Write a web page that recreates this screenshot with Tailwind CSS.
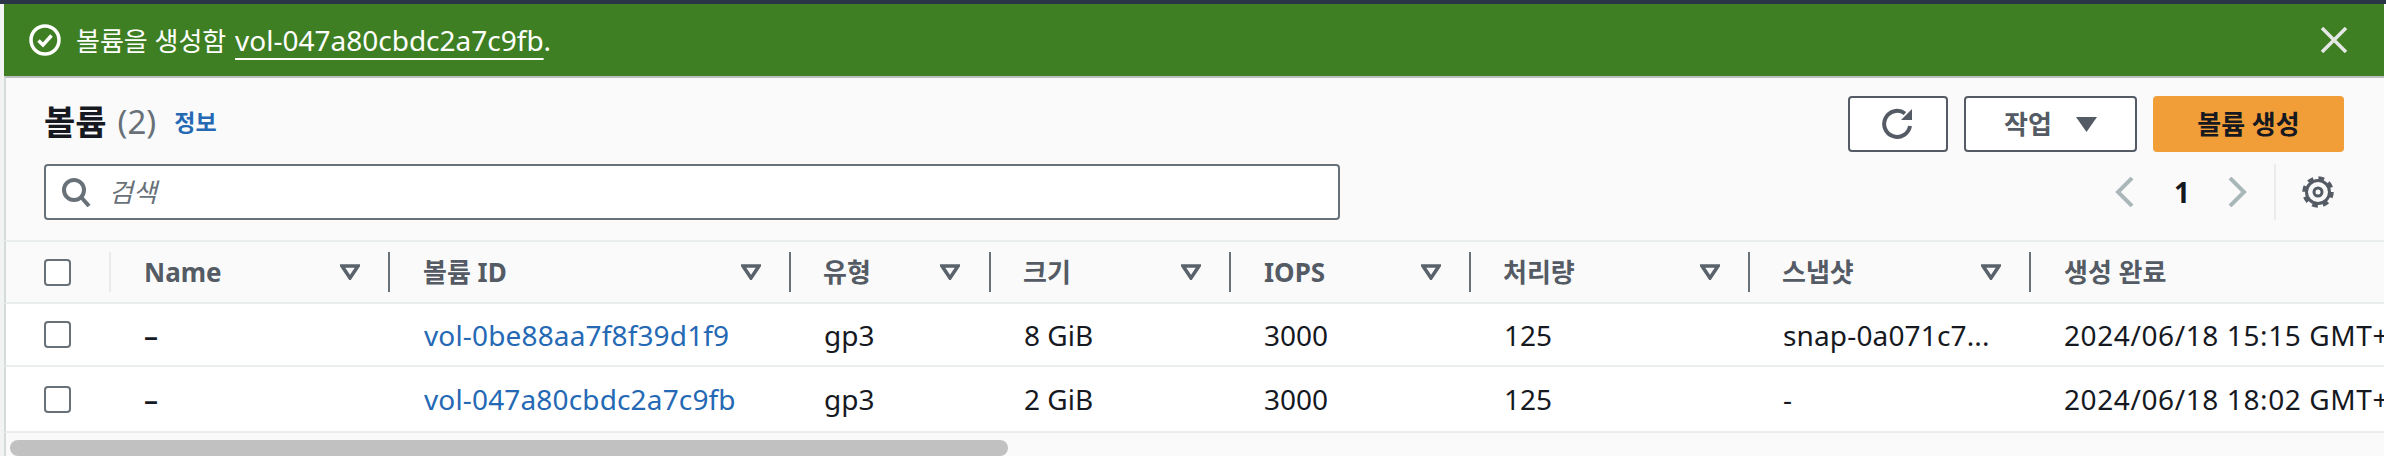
<!DOCTYPE html>
<html lang="ko">
<head>
<meta charset="UTF-8">
<title>볼륨</title>
<script src="https://cdn.jsdelivr.net/npm/@tailwindcss/browser@4"></script>
</head>
<body class="bg-white overflow-hidden font-['Noto_Sans','Noto_Sans_CJK_KR',sans-serif]">
<div class="w-[2386px] h-[456px] flex flex-col overflow-hidden">
  <div class="h-[4px] bg-[#2a3548] shrink-0"></div>
  <div class="flex flex-1 min-h-0">
    <div class="w-[4px] bg-[#f2f3f3] shrink-0"></div>
    <main class="w-[2380px] shrink-0 flex flex-col bg-[#fafafa]">
      <!-- flash -->
      <div class="h-[72px] shrink-0 bg-[#3f7f23] text-white flex items-center pl-[25px] pr-[37px]">
        <svg class="w-[32px] h-[32px] shrink-0" viewBox="0 0 32 32" fill="none" stroke="#fff">
          <circle cx="16" cy="16" r="14" stroke-width="3.5"/>
          <path d="M9.5 16.5 14 21l8.5-9.5" stroke-width="3.5"/>
        </svg>
        <p class="ml-[15px] text-[26px] leading-[32px] whitespace-nowrap">볼륨을 생성함 <span class="ml-[2px] text-[28px] underline underline-offset-[7px] decoration-2">vol-047a80cbdc2a7c9fb</span><span class="text-[28px]">.</span></p>
        <svg class="ml-auto w-[26px] h-[26px] shrink-0" viewBox="0 0 26 26" fill="none" stroke="#e4e7e4" stroke-width="3.5"><path d="M1 1 25 25M25 1 1 25"/></svg>
      </div>
      <!-- header -->
      <div class="h-[164px] shrink-0 border-t-2 border-l-2 border-[#bcbfc1] border-l-[#d5dbdb] pl-[38px] pr-[40px] pt-[18px] flex justify-between">
        <div class="flex flex-col gap-[12px]">
          <div class="flex items-center h-[56px] pb-[4px]">
            <h1 class="text-[34px] font-bold text-[#16191f] leading-[40px]">볼륨</h1>
            <span class="ml-[11px] text-[33px] text-[#687078] leading-[40px]">(2)</span>
            <a class="ml-[18px] text-[23px] font-bold text-[#2569b5]">정보</a>
          </div>
          <div class="w-[1296px] h-[56px] bg-white border-2 border-[#687078] rounded-[4px] flex items-center pl-[15px]">
            <svg class="w-[30px] h-[30px] shrink-0" viewBox="0 0 30 30" fill="none" stroke="#687078" stroke-width="4"><circle cx="13" cy="13" r="10"/><path d="m20 20 8 9"/></svg>
            <span class="ml-[18px] text-[26px] italic text-[#687078]">검색</span>
          </div>
        </div>
        <div class="flex flex-col gap-[12px] items-end">
          <div class="flex gap-[16px] h-[56px]">
            <button class="w-[100px] h-[56px] bg-white border-2 border-[#545b64] rounded-[4px] flex items-center justify-center">
              <svg class="w-[34px] h-[34px]" viewBox="0 0 34 34" fill="none" stroke="#545b64" stroke-width="4"><path d="M29 19a13 13 0 1 1-5-12.500"/><path d="M31 2v11H20z" fill="#545b64" stroke="none"/></svg>
            </button>
            <button class="w-[173px] h-[56px] bg-white border-2 border-[#545b64] rounded-[4px] flex items-center justify-center gap-[24px] text-[26px] font-bold text-[#545b64]">
              <span>작업</span>
              <svg class="w-[21px] h-[15px]" viewBox="0 0 21 15" fill="#545b64"><path d="M0 0h21L10.500 15z"/></svg>
            </button>
            <button class="w-[191px] h-[56px] bg-[#f29e38] rounded-[4px] text-[26px] font-bold text-[#16191f]">볼륨 생성</button>
          </div>
          <div class="flex items-center h-[56px] pr-[10px]">
            <svg class="w-[19px] h-[30px]" viewBox="0 0 19 30" fill="none" stroke="#aab7b8" stroke-width="4"><path d="M17 1 3 15l14 14"/></svg>
            <span class="ml-[40px] w-[14px] text-center text-[28px] font-bold text-[#16191f]">1</span>
            <svg class="ml-[40px] w-[19px] h-[30px]" viewBox="0 0 19 30" fill="none" stroke="#aab7b8" stroke-width="4"><path d="m2 1 14 14L2 29"/></svg>
            <div class="ml-[27px] w-[2px] h-[56px] bg-[#e9ebed]"></div>
            <svg class="ml-[26px] w-[32px] h-[32px]" viewBox="0 0 32 32" fill="none" stroke="#545b64">
              <circle cx="16" cy="16" r="11.500" stroke-width="3"/>
              <circle cx="16" cy="16" r="14" stroke-width="3.500" stroke-dasharray="5.800 5.200"/>
              <circle cx="16" cy="16" r="4" stroke-width="3"/>
            </svg>
          </div>
        </div>
      </div>
      <!-- table head -->
      <div class="h-[64px] shrink-0 border-y-2 border-[#eaeded] border-l-2 border-l-[#d5dbdb] grid grid-cols-[105px_279px_401px_200px_240px_240px_279px_281px_353px] items-center text-[26px] font-bold text-[#545b64]">
        <div class="h-[40px] pl-[38px] border-r-2 border-[#e9ebed] flex items-center"><span class="block w-[27px] h-[27px] bg-white border-2 border-[#687078] rounded-[4px]"></span></div>
        <div class="h-[40px] pl-[33px] pr-[28px] border-r-2 border-[#687078] flex items-center justify-between">Name<svg class="w-[20px] h-[16px]" viewBox="0 0 20 16" fill="none" stroke="#5a626c" stroke-width="3.500"><path d="M2 2h16l-8 12z"/></svg></div>
        <div class="h-[40px] pl-[33px] pr-[28px] border-r-2 border-[#687078] flex items-center justify-between">볼륨 ID<svg class="w-[20px] h-[16px]" viewBox="0 0 20 16" fill="none" stroke="#5a626c" stroke-width="3.500"><path d="M2 2h16l-8 12z"/></svg></div>
        <div class="h-[40px] pl-[32px] pr-[29px] border-r-2 border-[#687078] flex items-center justify-between">유형<svg class="w-[20px] h-[16px]" viewBox="0 0 20 16" fill="none" stroke="#5a626c" stroke-width="3.500"><path d="M2 2h16l-8 12z"/></svg></div>
        <div class="h-[40px] pl-[32px] pr-[28px] border-r-2 border-[#687078] flex items-center justify-between">크기<svg class="w-[20px] h-[16px]" viewBox="0 0 20 16" fill="none" stroke="#5a626c" stroke-width="3.500"><path d="M2 2h16l-8 12z"/></svg></div>
        <div class="h-[40px] pl-[33px] pr-[28px] border-r-2 border-[#687078] flex items-center justify-between">IOPS<svg class="w-[20px] h-[16px]" viewBox="0 0 20 16" fill="none" stroke="#5a626c" stroke-width="3.500"><path d="M2 2h16l-8 12z"/></svg></div>
        <div class="h-[40px] pl-[32px] pr-[28px] border-r-2 border-[#687078] flex items-center justify-between">처리량<svg class="w-[20px] h-[16px]" viewBox="0 0 20 16" fill="none" stroke="#5a626c" stroke-width="3.500"><path d="M2 2h16l-8 12z"/></svg></div>
        <div class="h-[40px] pl-[32px] pr-[28px] border-r-2 border-[#687078] flex items-center justify-between">스냅샷<svg class="w-[20px] h-[16px]" viewBox="0 0 20 16" fill="none" stroke="#5a626c" stroke-width="3.500"><path d="M2 2h16l-8 12z"/></svg></div>
        <div class="h-[40px] pl-[33px] flex items-center">생성 완료</div>
      </div>
      <!-- rows -->
      <div class="h-[63px] shrink-0 bg-white border-b-2 border-[#eaeded] border-l-2 border-l-[#d5dbdb] grid grid-cols-[105px_279px_401px_200px_240px_240px_279px_281px_353px] items-center text-[28px] text-[#16191f] whitespace-nowrap">
        <div class="pl-[38px]"><span class="block w-[27px] h-[27px] bg-white border-2 border-[#687078] rounded-[4px]"></span></div>
        <div class="pl-[33px] font-semibold">–</div>
        <a class="pl-[34px] tracking-[.15px] text-[#2569b5]">vol-0be88aa7f8f39d1f9</a>
        <div class="pl-[33px]">gp3</div>
        <div class="pl-[33px]">8 GiB</div>
        <div class="pl-[33px]">3000</div>
        <div class="pl-[33px]">125</div>
        <div class="pl-[33px] tracking-[.15px]">snap-0a071c7...</div>
        <div class="pl-[33px] tracking-[.6px] overflow-hidden">2024/06/18 15:15 GMT+9</div>
      </div>
      <div class="h-[66px] shrink-0 bg-white border-b-2 border-[#eaeded] border-l-2 border-l-[#d5dbdb] grid grid-cols-[105px_279px_401px_200px_240px_240px_279px_281px_353px] items-center text-[28px] text-[#16191f] whitespace-nowrap">
        <div class="pl-[38px]"><span class="block w-[27px] h-[27px] bg-white border-2 border-[#687078] rounded-[4px]"></span></div>
        <div class="pl-[33px] font-semibold">–</div>
        <a class="pl-[34px] tracking-[.15px] text-[#2569b5]">vol-047a80cbdc2a7c9fb</a>
        <div class="pl-[33px]">gp3</div>
        <div class="pl-[33px]">2 GiB</div>
        <div class="pl-[33px]">3000</div>
        <div class="pl-[33px]">125</div>
        <div class="pl-[33px]">-</div>
        <div class="pl-[33px] tracking-[.6px] overflow-hidden">2024/06/18 18:02 GMT+9</div>
      </div>
      <!-- horizontal scrollbar -->
      <div class="flex-1 min-h-0 border-l-2 border-[#d5dbdb] pt-[7px] pl-[4px]">
        <div class="w-[998px] h-[16px] rounded-full bg-[#c1c1c1]"></div>
      </div>
    </main>
  </div>
</div>
</body>
</html>
